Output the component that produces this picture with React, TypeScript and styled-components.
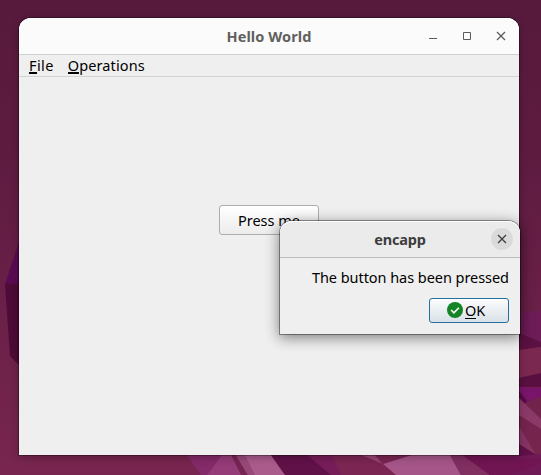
import React from "react";
import styled, { createGlobalStyle } from "styled-components";

const GlobalStyle = createGlobalStyle`
  *, *::before, *::after { box-sizing: border-box; }
  body { margin: 0; overflow: hidden; }
  button { font: inherit; color: inherit; }
`;

const Desktop = styled.main`
  position: relative;
  width: 541px;
  height: 475px;
  padding: 18px 22px 20px 19px;
  overflow: hidden;
  background: linear-gradient(180deg, #571a3c 0%, #5d1b40 30%, #6a2048 65%, #78264f 100%);
  font-family: "Noto Sans", "Open Sans", sans-serif;
  font-size: 14.5px;
  color: #000;
`;

const Wallpaper = styled.svg`
  position: absolute;
  inset: 0;
`;

const AppWindow = styled.section`
  position: relative;
  display: flex;
  flex-direction: column;
  width: 500px;
  height: 437px;
  border-radius: 12px 12px 0 0;
  background: #efefef;
  box-shadow: 0 0 0 1px rgba(0, 0, 0, 0.3), 0 2px 9px rgba(0, 0, 0, 0.28);
`;

const TitleBar = styled.header<{ $dialog?: boolean }>`
  display: grid;
  grid-template-columns: 1fr auto 1fr;
  align-items: center;
  flex: none;
  height: 37px;
  padding-right: ${(p) => (p.$dialog ? 7 : 12)}px;
  padding-left: ${(p) => (p.$dialog ? 7 : 12)}px;
  border-bottom: 1px solid ${(p) => (p.$dialog ? "#bdbdbd" : "#d0d0d0")};
  border-radius: 12px 12px 0 0;
  background: ${(p) => (p.$dialog ? "#ebebeb" : "#fbfbfb")};
  box-shadow: inset 0 1px #fff;
`;

const Title = styled.h1<{ $dialog?: boolean }>`
  grid-column: 2;
  margin: 0;
  color: ${(p) => (p.$dialog ? "#3d3d3d" : "#606060")};
  font-size: 14.5px;
  line-height: 20px;
  font-weight: 700;
  letter-spacing: ${(p) => (p.$dialog ? "-0.2px" : "0.1px")};
  white-space: nowrap;
`;

const Controls = styled.div`
  grid-column: 3;
  justify-self: end;
  display: flex;
  gap: 22px;
`;

const ControlButton = styled.button<{ $round?: boolean }>`
  display: grid;
  place-items: center;
  width: ${(p) => (p.$round ? 22 : 12)}px;
  height: ${(p) => (p.$round ? 22 : 12)}px;
  padding: 0;
  border: 0;
  border-radius: 50%;
  color: ${(p) => (p.$round ? "#3d3d3d" : "#5b5b5b")};
  background: ${(p) => (p.$round ? "#dadada" : "transparent")};
`;

const MenuBar = styled.nav`
  display: flex;
  gap: 14px;
  flex: none;
  height: 22px;
  padding: 0 10px;
  border-bottom: 1px solid #d3d3d3;
  line-height: 21px;
`;

const MenuItem = styled.span<{ $tracking: number }>`
  letter-spacing: ${(p) => p.$tracking}px;
`;

const Mnemonic = styled.span`
  display: inline-block;
  height: 19px;
  border-bottom: 2px solid #000;
  line-height: 21px;
  vertical-align: top;
`;

const Content = styled.div`
  display: flex;
  flex: 1;
  align-items: flex-start;
  justify-content: center;
  padding-top: 128px;
`;

const PushButton = styled.button<{ $primary?: boolean }>`
  display: flex;
  align-items: center;
  justify-content: center;
  width: ${(p) => (p.$primary ? 80 : 100)}px;
  height: ${(p) => (p.$primary ? 25 : 30)}px;
  gap: 2px;
  padding: ${(p) => (p.$primary ? "0 6px 1px 0" : "0")};
  border: 1px solid ${(p) => (p.$primary ? "#24719f" : "#adadad")};
  border-radius: 3px;
  background: ${(p) =>
    p.$primary ? "linear-gradient(#fcfcfd, #d9e2e8)" : "linear-gradient(#fff, #ececec)"};
  line-height: 20px;
  white-space: nowrap;
`;

const ButtonLabel = styled.span`
  height: 20px;
  letter-spacing: -0.1px;
`;

const ButtonKey = styled.span`
  display: inline-block;
  height: 19px;
  border-bottom: 1px solid #000;
  line-height: 20px;
  vertical-align: top;
`;

const Dialog = styled.section`
  position: absolute;
  top: 221px;
  left: 280px;
  width: 240px;
  height: 113px;
  border-radius: 12px 12px 0 0;
  background: #efefef;
  box-shadow: 0 0 0 1px rgba(0, 0, 0, 0.38), 0 3px 14px 1px rgba(0, 0, 0, 0.46);
`;

const DialogBody = styled.div`
  display: flex;
  flex-direction: column;
  align-items: flex-end;
  gap: 11px;
  padding: 9px 11px 11px;
`;

const Message = styled.p`
  margin: 0;
  line-height: 20px;
  letter-spacing: -0.05px;
  white-space: nowrap;
`;

const CloseIcon = () => (
  <svg width="12" height="12" viewBox="0 0 12 12" fill="none" stroke="currentColor" strokeWidth="1.3">
    <path d="m2 2 8 8m0-8-8 8" />
  </svg>
);

const MinimizeIcon = () => (
  <svg width="12" height="12" viewBox="0 0 12 12"><path fill="currentColor" d="M2 8h8v1H2z" /></svg>
);

const MaximizeIcon = () => (
  <svg width="12" height="12" viewBox="0 0 12 12" fill="none" stroke="currentColor"><path d="M2.5 2.5h7v7h-7z" /></svg>
);

const AcceptIcon = () => (
  <svg width="16" height="16" viewBox="0 0 16 16">
    <circle cx="8" cy="8" r="8" fill="#138527" />
    <path d="m4.2 8 2.7 2.8 5-5.1" fill="none" stroke="#fff" strokeWidth="1.6" />
  </svg>
);

const facets: [string, string][] = [
  ["19,242 5,284 19,283", "#5a0a51"],
  ["5,284 19,283 19,365 10,356", "#4d0b37"],
  ["519,313 541,311 541,346 519,350", "#6e1c58"],
  ["519,333 541,342 541,347 519,350", "#5b1141"],
  ["519,350 541,347 541,374 519,378", "#7b2851"],
  ["519,378 541,373 541,387 519,387", "#590f3f"],
  ["519,387 541,388 541,397 533,399 526,403 519,394", "#78156b"],
  ["519,391 527,401 524,404 519,399", "#560b43"],
  ["519,398 541,419 541,429 519,415", "#8b3967"],
  ["519,426 536,455 519,445", "#853362"],
  ["519,444 538,456 519,456", "#5f1047"],
  ["440,455 519,456 541,454 541,475 440,475", "#701957"],
  ["187,455 222,455 207,475 201,475", "#842969"],
  ["222,455 232,455 244,475 207,475", "#943b78"],
  ["231,455 237,455 248,475 241,475", "#762452"],
  ["236,455 271,455 285,475 248,475", "#aa5b8b"],
  ["236,455 245,455 255,475 248,475", "#984878"],
  ["271,455 310,455 331,475 285,475", "#601148"],
  ["307,455 332,455 341,475 331,475", "#761c59"],
  ["332,455 361,455 383,464 396,475 341,475", "#7a2552"],
  ["361,455 375,455 383,464", "#974575"],
  ["375,455 412,455 383,464", "#792450"],
  ["412,455 450,455 461,475 396,475 383,464", "#a55588"],
  ["450,455 462,455 490,475 461,475", "#812e60"],
  ["463,455 541,459 541,463 510,475 490,475", "#701552"],
];

export default function App() {
  return (
    <>
      <GlobalStyle />
      <Desktop>
        <Wallpaper width="541" height="475" aria-hidden="true">
          {facets.map(([points, fill], index) => <polygon key={index} points={points} fill={fill} />)}
        </Wallpaper>
        <AppWindow>
          <TitleBar>
            <Title>Hello World</Title>
            <Controls>
              <ControlButton aria-label="Minimize"><MinimizeIcon /></ControlButton>
              <ControlButton aria-label="Maximize"><MaximizeIcon /></ControlButton>
              <ControlButton aria-label="Close"><CloseIcon /></ControlButton>
            </Controls>
          </TitleBar>
          <MenuBar>
            <MenuItem $tracking={0.4}><Mnemonic>F</Mnemonic>ile</MenuItem>
            <MenuItem $tracking={0.1}><Mnemonic>O</Mnemonic>perations</MenuItem>
          </MenuBar>
          <Content><PushButton>Press me</PushButton></Content>
        </AppWindow>
        <Dialog role="dialog" aria-label="encapp">
          <TitleBar $dialog>
            <Title as="h2" $dialog>encapp</Title>
            <Controls><ControlButton $round aria-label="Close"><CloseIcon /></ControlButton></Controls>
          </TitleBar>
          <DialogBody>
            <Message>The button has been pressed</Message>
            <PushButton $primary>
              <AcceptIcon />
              <ButtonLabel><ButtonKey>O</ButtonKey>K</ButtonLabel>
            </PushButton>
          </DialogBody>
        </Dialog>
      </Desktop>
    </>
  );
}
